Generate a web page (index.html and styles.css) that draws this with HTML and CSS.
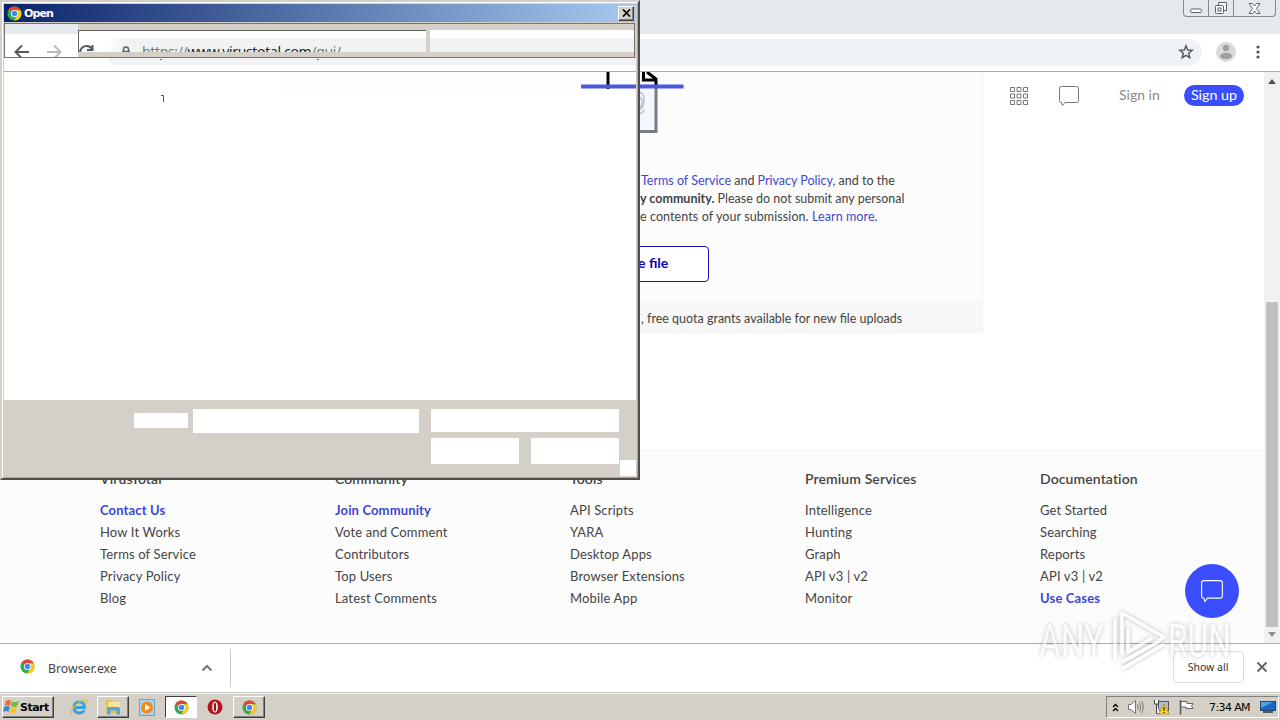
FILE: index.html
```html
<!DOCTYPE html>
<html lang="en">
  <head>
    <meta charset="UTF-8" />
    <meta name="viewport" content="width=device-width, initial-scale=1.0" />
    <title>VirusTotal</title>
    <link rel="stylesheet" href="styles.css">
  </head>
  <body>
    <!-- shared icons -->
    <svg class="defs" width="0" height="0">
      <symbol id="chrome" viewBox="0 0 16 16">
        <circle cx="8" cy="8" r="7.5" fill="#34a853" />
        <path d="M8 8L1.5 4.2A7.5 7.5 0 0 1 14.5 4.2L8 4.5Z" fill="#ea4335" />
        <path d="M8 4.5H14.6A7.5 7.5 0 0 1 7.6 15.5L11 9.8Z" fill="#fbc918" />
        <circle cx="8" cy="8" r="3.8" fill="#fff" />
        <circle cx="8" cy="8" r="2.9" fill="#4285f4" />
      </symbol>
      <symbol id="chat" viewBox="0 0 22 22">
        <path d="M3.5 1.5H18.5Q20.5 1.5 20.5 3.5V15.5Q20.5 17.5 18.5 17.5H7L4.5 20.5L3.5 17.5Q1.5 17.5 1.5 15.5V3.5Q1.5 1.5 3.5 1.5Z" fill="none" stroke="currentColor" />
      </symbol>
    </svg>

    <div class="desktop">
      <div class="tabstrip">
        <div class="window-buttons">
          <span class="minimize"><svg width="14" height="6"><rect x="1.5" y="1" width="11" height="3.5" rx="1.5" /></svg></span>
          <span class="restore"><svg width="14" height="14"><path d="M4.5 4V1.5H12.5V9.5H10" /><rect x="1.5" y="4.500" width="8" height="8" rx="1" /><rect x="4" y="7" width="3" height="3" /></svg></span>
          <span class="close"><svg width="13" height="11"><path d="M1 .5H4.500L6.500 3L8.500 .5H12L8.500 5.500L12 10.500H8.500L6.500 8L4.500 10.500H1L4.500 5.500Z" /></svg></span>
        </div>
      </div>

      <div class="toolbar">
        <div class="omnibox">
          <svg width="16" height="16" viewBox="0 0 16 16"><path d="M8 1.800L9.700 6L14.200 6.300L10.700 9.200L11.800 13.700L8 11.300L4.200 13.700L5.300 9.200L1.800 6.300L6.300 6Z" fill="none" stroke="#555a60" stroke-width="1.500" /></svg>
        </div>
        <svg class="avatar" width="20" height="20"><circle cx="10" cy="10" r="10" fill="#dadada" /><circle cx="10" cy="6" r="3.200" fill="#a0a0a0" /><ellipse cx="10" cy="14" rx="6" ry="3.200" fill="#a0a0a0" /></svg>
        <svg class="menu" width="4" height="14" fill="#50555a"><circle cx="2" cy="2" r="1.600" /><circle cx="2" cy="7" r="1.600" /><circle cx="2" cy="12" r="1.600" /></svg>
      </div>

      <div class="viewport">
        <div class="page">
          <div class="main">
            <div class="card">
              <div class="drop">
                <svg class="file-art" width="104" height="64" viewBox="580 72 104 64">
                  <path d="M608 72V131.500H656V84" fill="#f3f8ff" stroke="#7b7b83" stroke-width="3" />
                  <path d="M608 72V89M643.500 72V80H656M647 72L656 79V87" fill="none" stroke="#000" stroke-width="3" />
                  <path d="M636 92Q645 91 644 101T636 111M638 97Q643 97 642 103T638 107M640 114L645 110" fill="none" stroke="#b9c0cc" stroke-width="1.500" />
                  <path d="M581 86.500H683.500" stroke="#4c58e4" stroke-width="4" />
                </svg>
                <div class="terms">
                  <p class="t1"><a>Terms of Service</a> and <a>Privacy Policy</a>, and to the</p>
                  <p class="t2"><b>y community.</b> Please do not submit any personal</p>
                  <p class="t3">e contents of your submission. <a>Learn more.</a></p>
                </div>
                <div class="choose">e file</div>
              </div>
              <div class="quota">, free quota grants available for new file uploads</div>
            </div>
            <div class="account">
              <svg width="20" height="20" viewBox="0 0 20 20" fill="none" stroke="#777"><path d="M1.500 1.500h4v4h-4zM8 1.500h4v4H8zM14.500 1.500h4v4h-4zM1.500 8h4v4h-4zM8 8h4v4H8zM14.500 8h4v4h-4zM1.500 14.500h4v4h-4zM8 14.500h4v4H8zM14.500 14.500h4v4h-4z" /></svg>
              <svg class="chat-icon" width="22" height="22"><use href="#chat" /></svg>
              <span class="sign-in">Sign in</span>
              <span class="sign-up">Sign up</span>
            </div>
          </div>

          <div class="footer">
            <div class="col">
              <h4>VirusTotal</h4>
              <a class="strong">Contact Us</a><a>How It Works</a><a>Terms of Service</a><a>Privacy Policy</a><a>Blog</a>
            </div>
            <div class="col">
              <h4>Community</h4>
              <a class="strong">Join Community</a><a>Vote and Comment</a><a>Contributors</a><a>Top Users</a><a>Latest Comments</a>
            </div>
            <div class="col">
              <h4>Tools</h4>
              <a>API Scripts</a><a>YARA</a><a>Desktop Apps</a><a>Browser Extensions</a><a>Mobile App</a>
            </div>
            <div class="col">
              <h4>Premium Services</h4>
              <a>Intelligence</a><a>Hunting</a><a>Graph</a><a>API v3 | v2</a><a>Monitor</a>
            </div>
            <div class="col">
              <h4>Documentation</h4>
              <a>Get Started</a><a>Searching</a><a>Reports</a><a>API v3 | v2</a><a class="strong">Use Cases</a>
            </div>
          </div>
        </div>
        <div class="scrollbar">
          <svg width="8" height="5"><path d="M0 5L4 0L8 5Z" fill="#505050" /></svg>
          <div class="thumb"></div>
          <svg width="8" height="5"><path d="M0 0L4 5L8 0Z" fill="#909090" /></svg>
        </div>
      </div>

      <div class="shelf">
        <div class="download">
          <svg class="file-icon" width="15" height="15"><use href="#chrome" /></svg>
          <span class="file-name">Browser.exe</span>
          <svg width="12" height="8"><path d="M1.500 6.500L6 2L10.500 6.500" fill="none" stroke="#777" stroke-width="2" /></svg>
        </div>
        <div class="show-all">Show all</div>
        <svg class="shelf-close" width="12" height="12"><path d="M1.500 1.500L10.500 10.500M10.500 1.500L1.500 10.500" stroke="#666" stroke-width="2" /></svg>
      </div>

      <div class="taskbar">
        <div class="start">
          <svg width="17" height="16" viewBox="0 0 17 16"><path d="M3 2Q6 0 8 2L7 7Q4 5 1.500 7Z" fill="#ed6b30" /><path d="M9 2.500Q12 4 16 2L14 7.500Q11 9 8 7.300Z" fill="#77b843" /><path d="M1.300 8Q4 6 6.800 8L5.500 13Q3 11 0 13Z" fill="#3b83c8" /><path d="M7.800 8.500Q10.500 10 13.800 8.500L12.500 13.500Q9 15 6.500 13.300Z" fill="#f8c030" /></svg>
          Start
        </div>
        <div class="task ie">
          <svg width="18" height="18" viewBox="0 0 18 18"><path d="M4 9.500H14.500Q14.500 4 9.500 4Q4 4 4 9.500Q4 15 9.500 15Q13 15 14.200 12.300" fill="none" stroke="#36a3df" stroke-width="2.800" /><path d="M2 16Q-1 14 6 7T17 2Q18 4 15 7" fill="none" stroke="#e8b938" stroke-width="1.200" /></svg>
        </div>
        <div class="task raised">
          <svg width="18" height="18" viewBox="0 0 18 18"><path d="M2 2H7L8 4H15V15H2Z" fill="#e6bf55" /><path d="M4 4H16V12H4Z" fill="#f9e690" /><path d="M3 16.500V10.500Q3 9 4.500 9H14.500Q16 9 16 10.500V16.500H12.500V12.500H6.500V16.500Z" fill="#55a7dd" /></svg>
        </div>
        <div class="task">
          <svg width="16" height="17" viewBox="0 0 16 17"><rect x=".5" y=".5" width="15" height="16" fill="#a9d3ef" stroke="#6f9fc4" /><circle cx="8" cy="8.500" r="6" fill="#f18a1b" /><path d="M6 5L11.500 8.500L6 12Z" fill="#fff" /></svg>
        </div>
        <div class="task pressed"><svg width="15" height="15"><use href="#chrome" /></svg></div>
        <div class="task">
          <svg width="16" height="16"><circle cx="8" cy="8" r="7.500" fill="#b4131a" /><ellipse cx="8" cy="8" rx="2.800" ry="5.500" fill="#fff" /><ellipse cx="8" cy="8" rx="1.200" ry="4.500" fill="#9c1016" /></svg>
        </div>
        <div class="task raised"><svg width="15" height="15"><use href="#chrome" /></svg></div>

        <div class="tray">
          <svg width="7" height="9"><path d="M1 4L3.500 1.500L6 4M1 8L3.500 5.500L6 8" fill="none" stroke="#000" stroke-width="1.400" /></svg>
          <svg width="18" height="16" fill="none" stroke="#777"><path d="M1.500 5.500H4L8.500 1.500V14.500L4 10.500H1.500Z" fill="#fff" /><path d="M10.500 5.500Q12 8 10.500 10.500M12.500 3.500Q15 8 12.500 12.500M14.500 2Q18 8 14.500 14" /></svg>
          <svg width="17" height="16"><rect x="5.500" y="2.500" width="10" height="9" fill="#aebdd2" stroke="#555" /><path d="M1.500 1V5H5.500V1M3.500 5V14.500H7" fill="#fff" stroke="#444" /><path d="M11 5L16.500 15H5.500Z" fill="#ffd21c" stroke="#a08010" stroke-width=".6" /><path d="M11 8V12M11 13V14" stroke="#222" stroke-width="1.200" /></svg>
          <svg width="17" height="16"><path d="M2.500 1V15.500" stroke="#555" stroke-width="1.500" /><path d="M3 2.500H9V4.500H15L13.500 7L15 9.500H8V8H3Z" fill="#fff" stroke="#666" /></svg>
          <span class="clock">7:34 AM</span>
          <svg width="16" height="14"><rect x=".5" y="1.500" width="15" height="9" fill="#1767bd" stroke="#2b486a" /><path d="M1 2H13L1 8Z" fill="#4ea1e5" /><path d="M3 12H13" stroke="#333" stroke-width="1.500" /></svg>
        </div>
      </div>
    </div>

    <!-- floating chat button -->
    <div class="chat-fab"><svg width="24" height="24"><use href="#chat" /></svg></div>

    <!-- file dialog, only partly painted -->
    <div class="dialog">
      <div class="titlebar">
        <svg width="15" height="15"><use href="#chrome" /></svg>
        <span class="title">Open</span>
        <div class="dialog-close"><svg width="9" height="8"><path d="M1 .5L8 7.500M8 .5L1 7.500" stroke="#000" stroke-width="1.700" /></svg></div>
      </div>
      <div class="dialog-bar">
        <div class="nav">
          <svg width="73" height="24" fill="none" stroke-width="2"><path d="M24 18H11.500M17 11.500L10.500 18L17 24.500" stroke="#555a60" /><path d="M42 18H55M49 11.500L55.500 18L49 24.500" stroke="#b8babd" /></svg>
        </div>
        <div class="path-box">
          <svg width="52" height="21" fill="none"><path d="M1 21Q2 15 8 15Q11 15 13 18M13.500 14V19H8" stroke="#555a60" stroke-width="2" /><path d="M44.500 20V18.500Q44.500 16 47 16T49.500 18.500V20M43 20.500H51" stroke="#606468" stroke-width="1.500" /></svg>
          <span class="url"><i>https://</i>www.virustotal.com<i>/gui/</i></span>
        </div>
        <div class="search-box"></div>
      </div>
      <div class="under-bar"><div class="omnibox-rest"><i></i><i></i></div></div>
      <div class="dialog-body">
        <div class="card-rest"></div>
        <svg class="art-rest" width="56" height="20"><path d="M28 0V17" stroke="#000" stroke-width="3" /><path d="M1 14.500H56" stroke="#4c58e4" stroke-width="4" /></svg>
        <svg class="text-rest" width="5" height="9"><path d="M0 1.500H2.500V8" fill="none" stroke="#555" /></svg>
      </div>
      <div class="dialog-foot">
        <div class="name-label"></div>
        <div class="name-input"></div>
        <div class="actions"><div class="filter"></div><div class="btn"></div><div class="btn"></div></div>
        <div class="grip"></div>
      </div>
    </div>

    <svg class="watermark" width="200" height="68" viewBox="0 0 200 68">
      <g fill="#fff" fill-opacity=".9">
        <text x="3" y="49" textLength="65" lengthAdjust="spacingAndGlyphs">ANY</text>
        <text x="132" y="49" textLength="63" lengthAdjust="spacingAndGlyphs">RUN</text>
      </g>
      <path d="M86 46V5L128 29L122 33M79 10V52M92 20V44L116 30M86 54L124 33M86 61L128 36" fill="none" stroke="#fff" stroke-width="3.500" stroke-linejoin="round" />
    </svg>
  </body>
</html>
```
FILE: styles.css
```css
* {
  box-sizing: border-box;
}

body {
  margin: 0;
  width: 1280px;
  height: 720px;
  overflow: hidden;
  position: relative;
  font-family: Lato, "Liberation Sans", sans-serif;
  color: #444;
  background: #fff;
}

svg {
  flex: none;
}

.defs {
  position: absolute;
}

.desktop {
  display: flex;
  flex-direction: column;
  height: 720px;
}

/* Browser window */
.tabstrip {
  display: flex;
  justify-content: flex-end;
  height: 34px;
  padding-right: 4px;
  background: #e6e9ec;
}

.window-buttons {
  display: flex;
  width: 93px;
  height: 17px;
  border: 1px solid #85898e;
  border-top: 0;
  border-radius: 0 0 4px 4px;
}

.window-buttons span {
  display: flex;
  align-items: center;
  justify-content: center;
  width: 25px;
  border-right: 1px solid #85898e;
}

.window-buttons .close {
  flex: 1;
  border: 0;
}

.window-buttons .minimize {
  padding-top: 5px;
}

.window-buttons svg {
  fill: #fff;
  stroke: #5b626b;
}

.toolbar {
  display: flex;
  align-items: center;
  height: 38px;
  padding: 0 20px 2px 108px;
  border-bottom: 1px solid #adadad;
}

.omnibox {
  display: flex;
  flex: 1;
  align-items: center;
  justify-content: flex-end;
  height: 27px;
  margin-top: 1px;
  padding-right: 8px;
  background: #f0f3f5;
  border-radius: 14px;
}

.avatar {
  margin-left: 14px;
}

.menu {
  margin-left: 20px;
}

/* Page */
.viewport {
  display: flex;
  height: 571px;
}

.page {
  width: 1264px;
}

.main {
  display: flex;
  height: 378px;
  padding-left: 282px;
}

.card {
  width: 701px;
  height: 261px;
  background: #fcfcfc;
  border-right: 1px solid #f3f3f3;
}

.drop {
  height: 230px;
  padding-left: 298px;
}

.file-art {
  display: block;
}

.terms {
  padding: 36px 0 0 60px;
  font-size: 12.5px;
  line-height: 18px;
  white-space: nowrap;
}

.terms p {
  margin: 0;
}

.t1 {
  padding-left: 1px;
}

.t3 {
  letter-spacing: 0.09px;
}

.terms a {
  color: #4048cf;
}

.choose {
  width: 129px;
  height: 36px;
  margin-top: 20px;
  padding-left: 57px;
  border: 1px solid #1a10ad;
  border-radius: 4px;
  background: #fff;
  color: #0b00bd;
  font-size: 14px;
  font-weight: 700;
  line-height: 32px;
}

.quota {
  height: 31px;
  padding-left: 359px;
  background: #f7f7f7;
  font-size: 12.5px;
  line-height: 33px;
  white-space: nowrap;
}

.account {
  display: flex;
  align-items: center;
  height: 48px;
  padding-left: 26px;
}

.chat-icon {
  margin-left: 29px;
  color: #777;
}

.sign-in {
  margin-left: 39px;
  width: 42px;
  padding-bottom: 3px;
  color: #8a8a8a;
  font-size: 14px;
  white-space: nowrap;
}

.sign-up {
  width: 60px;
  height: 21px;
  margin: 0 0 1px 23px;
  border-radius: 11px;
  background: #3b4eff;
  color: #fff;
  font-size: 14.3px;
  line-height: 19px;
  text-align: center;
}

.footer {
  display: grid;
  grid-template-columns: repeat(5, 235px);
  height: 193px;
  padding: 19px 0 0 100px;
  background: #fcfcfc;
  border-top: 1px solid #f5f5f5;
  overflow: hidden;
}

.footer h4 {
  margin: 0 0 11px;
  font-size: 14px;
  font-weight: 600;
  line-height: 18px;
  letter-spacing: 0.1px;
}

.footer a {
  display: block;
  font-size: 13px;
  line-height: 22px;
  letter-spacing: 0.15px;
}

.footer .strong {
  color: #3d46d3;
  font-weight: 700;
}

.scrollbar {
  display: flex;
  flex-direction: column;
  align-items: center;
  justify-content: space-between;
  width: 16px;
  padding: 7px 0 6px;
  background: #f1f1f1;
}

.thumb {
  width: 12px;
  height: 325px;
  margin: 212px 0 0;
  background: #c1c1c1;
}

/* Downloads */
.shelf {
  display: flex;
  align-items: center;
  height: 50px;
  padding-right: 12px;
  background: #fff;
  border-top: 1px solid #adadad;
  border-bottom: 1px solid #c8c8c8;
}

.download {
  display: flex;
  align-items: center;
  width: 231px;
  height: 38px;
  padding: 0 17px 0 20px;
  border-right: 1px solid #ccc;
}

.file-icon {
  margin-bottom: 3px;
}

.file-name {
  flex: 1;
  padding: 1px 0 0 13px;
  font: 12.3px "Noto Sans", sans-serif;
}

.show-all {
  width: 71px;
  height: 32px;
  margin: 0 0 2px auto;
  padding-right: 1px;
  border: 1px solid #dadce0;
  border-radius: 4px;
  color: #333;
  font: 10.5px/30px "Noto Sans", sans-serif;
  text-align: center;
}

.shelf-close {
  margin: 0 0 2px 12px;
}

/* Taskbar */
.taskbar {
  display: flex;
  align-items: center;
  height: 27px;
  background: #d4d0c8;
  border-top: 1px solid #f8f6f2;
}

.start {
  display: flex;
  align-items: center;
  width: 52px;
  height: 22px;
  margin: 0 9px 0 2px;
  border: 1px solid;
  border-color: #fff #404040 #404040 #fff;
  box-shadow: inset -1px -1px #808080;
  color: #000;
  font: bold 11px "DejaVu Sans", sans-serif;
  letter-spacing: -0.5px;
}

.task {
  display: flex;
  align-items: center;
  justify-content: center;
  width: 32px;
  height: 22px;
  margin-right: 2px;
}

.raised {
  border: 1px solid;
  border-color: #fff #404040 #404040 #fff;
  box-shadow: inset -1px -1px #808080;
}

.pressed {
  border: 1px solid;
  border-color: #404040 #fff #fff #404040;
  background: #fff;
}

.tray {
  display: flex;
  align-items: center;
  gap: 8px;
  width: 173px;
  height: 22px;
  margin: 0 1px 0 auto;
  padding: 0 2px 0 5px;
  border: 1px solid;
  border-color: #808080 #fff #fff #808080;
  color: #000;
}

.clock {
  flex: 1;
  padding-left: 6px;
  font: 11px "DejaVu Sans", sans-serif;
  letter-spacing: -0.6px;
  white-space: nowrap;
}

.chat-fab {
  position: absolute;
  left: 1185px;
  top: 564px;
  display: flex;
  align-items: center;
  justify-content: center;
  width: 54px;
  height: 54px;
  border-radius: 50%;
  background: #3b4eff;
  color: #fff;
}

/* Open dialog */
.dialog {
  position: absolute;
  left: 0;
  top: 0;
  width: 640px;
  height: 480px;
  padding: 2px 2px 1px 2px;
  background: #d4d0c8;
  border: 2px solid #d4d0c8;
  border-right-color: #504d4a;
  border-bottom-color: #504d4a;
  box-shadow: inset 1px 1px #fff, inset -1px -1px #aaa7a2;
}

.titlebar {
  display: flex;
  align-items: center;
  height: 18px;
  padding: 0 2px 0 3px;
  background: linear-gradient(90deg, #0a246a, #a6caf0);
  color: #fff;
}

.title {
  flex: 1;
  padding-left: 2px;
  font: bold 11px "DejaVu Sans", sans-serif;
  letter-spacing: -0.9px;
}

.dialog-close {
  display: flex;
  align-items: center;
  justify-content: center;
  width: 16px;
  height: 15px;
  background: #d4d0c8;
  border: 1px solid;
  border-color: #fff #404040 #404040 #fff;
  box-shadow: inset -1px -1px #808080;
}

.dialog-bar {
  display: flex;
  height: 35px;
  width: 631px;
  margin-top: 1px;
  border: 1px solid #77746e;
  background: #d4d0c8;
}

.nav {
  width: 73px;
  height: 33px;
  background: linear-gradient(#e6e9ee 10px, #fff 10px);
  overflow: hidden;
}

.nav svg {
  height: 33px;
  margin-top: 10px;
}

.path-box {
  display: flex;
  width: 348px;
  height: 22px;
  margin: 6px 4px 0 0;
  border: 1px solid #66635f;
  border-width: 1px 0 0 1px;
  background: linear-gradient(90deg, #fff 30px, #f0f2f4 44px);
  box-shadow: inset 0 7px #fff;
  overflow: hidden;
}

.url {
  height: 36px;
  padding: 11px 0 0 11px;
  color: #222;
  font: 14px/20px "Noto Sans", sans-serif;
  letter-spacing: -0.35px;
}

.url i {
  color: #777;
  font-style: normal;
}

.search-box {
  flex: 1;
  height: 22px;
  margin-top: 6px;
  background: linear-gradient(#fff 8px, #f0f2f4 8px);
}

.under-bar {
  width: 632px;
  height: 14px;
  padding-left: 105px;
  background: #fff;
  border-bottom: 1px solid #adadad;
}

.omnibox-rest {
  display: flex;
  gap: 155px;
  height: 7px;
  padding: 1px 0 0 51px;
  border-radius: 0 0 0 12px;
  background: #f0f2f4;
}

.omnibox-rest i {
  width: 2px;
  height: 1px;
  background: #686868;
}

.dialog-body {
  position: relative;
  width: 632px;
  height: 328px;
  background: #fff;
}

.card-rest {
  height: 19px;
  margin-left: 278px;
  background: #fdfdfd;
}

.art-rest {
  position: absolute;
  left: 576px;
  top: 0;
}

.text-rest {
  position: absolute;
  left: 157px;
  top: 22px;
}

.dialog-foot {
  display: flex;
  width: 632px;
  height: 76px;
  padding: 9px 0 0 130px;
  background: #d4d0c8;
}

.name-label {
  width: 54px;
  height: 15px;
  margin: 4px 5px 0 0;
  background: #fff;
}

.name-input {
  width: 226px;
  height: 24px;
  margin-right: 12px;
  background: #fff;
}

.actions {
  display: grid;
  grid-template-columns: 88px 88px;
  grid-template-rows: 23px 26px;
  gap: 6px 12px;
  width: 188px;
}

.filter {
  grid-column: span 2;
}

.filter,
.btn {
  background: #fff;
}

.grip {
  width: 16px;
  height: 16px;
  margin: 51px 0 0 1px;
  background: #fff;
}

.watermark {
  position: absolute;
  left: 1036px;
  top: 608px;
  opacity: 0.65;
  filter: drop-shadow(0 0 2px rgba(0, 0, 0, 0.4));
}

.watermark text {
  font: 46px Roboto, sans-serif;
}
```
